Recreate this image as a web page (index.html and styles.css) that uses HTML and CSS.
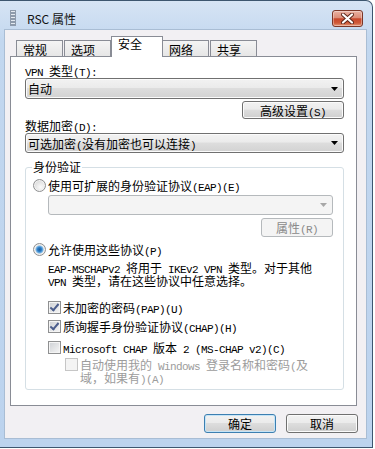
FILE: index.html
```html
<!DOCTYPE html>
<html lang="zh-CN">
<head>
    <meta charset="UTF-8">
    <meta name="viewport" content="width=device-width, initial-scale=1.0">
    <title>RSC 属性</title>
    <link rel="stylesheet" href="styles.css">
</head>
<body>
    <div class="window">
        <div class="titlebar">
            <svg class="app-icon" width="6" height="16" viewBox="0 0 6 16">
                <rect x="0" y="0" width="6" height="16" fill="#8d9aab"/>
                <rect x="1" y="1" width="4" height="1" fill="#e3e9f0"/>
                <rect x="1" y="4" width="4" height="1" fill="#e3e9f0"/>
                <rect x="1" y="7" width="4" height="1" fill="#e3e9f0"/>
                <rect x="1" y="10" width="4" height="1" fill="#e3e9f0"/>
                <rect x="1" y="13" width="4" height="1" fill="#e3e9f0"/>
            </svg>
            <span class="title">RSC 属性</span>
            <div class="close">
                <svg width="13" height="11" viewBox="0 0 13 11">
                    <path d="M2 1.5 L11 9.5 M11 1.5 L2 9.5" stroke="#5b2418" stroke-width="4" stroke-linecap="round"/>
                    <path d="M2 1.5 L11 9.5 M11 1.5 L2 9.5" stroke="#fff" stroke-width="2.2" stroke-linecap="round"/>
                </svg>
            </div>
        </div>

        <div class="client">
            <div class="tabs">
                <div class="tab">常规</div>
                <div class="tab">选项</div>
                <div class="tab active">安全</div>
                <div class="tab">网络</div>
                <div class="tab">共享</div>
            </div>

            <div class="panel">
                <div class="label label-first"><span class="en">VPN </span>类型<span class="en">(T):</span></div>
                <div class="combo vpn-combo">
                    <span>自动</span>
                    <svg class="arrow" width="7" height="4" viewBox="0 0 7 4"><path d="M0 0 H7 L3.5 4 Z"/></svg>
                </div>
                <div class="adv-row">
                    <button class="btn adv">高级设置<span class="en">(S)</span></button>
                </div>
                <div class="label">数据加密<span class="en">(D):</span></div>
                <div class="combo">
                    <span>可选加密<span class="en">(</span>没有加密也可以连接<span class="en">)</span></span>
                    <svg class="arrow" width="7" height="4" viewBox="0 0 7 4"><path d="M0 0 H7 L3.5 4 Z"/></svg>
                </div>

                <div class="group">
                    <div class="group-title">身份验证</div>

                    <div class="opt opt-eap">
                        <span class="radio"></span>
                        <span>使用可扩展的身份验证协议<span class="en">(EAP)(E)</span></span>
                    </div>
                    <div class="combo disabled eap-combo">
                        <span></span>
                        <svg class="arrow" width="7" height="4" viewBox="0 0 7 4"><path d="M0 0 H7 L3.5 4 Z"/></svg>
                    </div>
                    <div class="props-row">
                        <button class="btn disabled props">属性<span class="en">(R)</span></button>
                    </div>

                    <div class="opt opt-allow">
                        <span class="radio checked"></span>
                        <span>允许使用这些协议<span class="en">(P)</span></span>
                    </div>
                    <p class="desc"><span class="en">EAP-MSCHAPv2 </span>将用于<span class="en"> IKEv2 VPN </span>类型。对于其他<br><span class="en">VPN </span>类型，请在这些协议中任意选择。</p>

                    <div class="opt sub pap">
                        <span class="check on"></span>
                        <span>未加密的密码<span class="en">(PAP)(U)</span></span>
                    </div>
                    <div class="opt sub chap">
                        <span class="check on"></span>
                        <span>质询握手身份验证协议<span class="en">(CHAP)(H)</span></span>
                    </div>
                    <div class="opt sub mschap">
                        <span class="check"></span>
                        <span><span class="en">Microsoft CHAP </span>版本<span class="en"> 2 (MS-CHAP v2)(C)</span></span>
                    </div>
                    <div class="opt subsub auto">
                        <span class="check off"></span>
                        <span>自动使用我的<span class="en"> Windows </span>登录名称和密码<span class="en">(</span>及<br>域，如果有<span class="en">)(A)</span></span>
                    </div>
                </div>
            </div>

            <div class="footer">
                <button class="btn default">确定</button>
                <button class="btn">取消</button>
            </div>
        </div>
    </div>
</body>
</html>
```

FILE: styles.css
```css
* {
    box-sizing: border-box;
}

body {
    margin: 0;
    background: #fff;
    font-family: "Noto Sans CJK SC", sans-serif;
    font-size: 12px;
    line-height: 13px;
    color: #000;
}

.en {
    font-family: "Liberation Mono", monospace;
    font-size: 11px;
    letter-spacing: -0.6px;
    line-height: 0;
}

p {
    margin: 0;
}

/* window frame */

.window {
    width: 373px;
    height: 448px;
    border: 1px solid #3d566f;
    border-left: none;
    border-radius: 0 7px 0 0;
    background: linear-gradient(#d6e4f4, #c2d7ef 40px, #bcd3ee);
    display: flex;
    flex-direction: column;
}

.titlebar {
    height: 28px;
    flex: none;
    display: flex;
    align-items: flex-start;
    padding: 8px 9px 0 10px;
}

.app-icon {
    margin-top: 1px;
    flex: none;
}

.title {
    margin: 3px 0 0 11px;
    color: #111;
}

.close {
    margin-left: auto;
    margin-top: 1px;
    width: 31px;
    height: 17px;
    border: 1px solid #7b3627;
    border-radius: 3px;
    background: linear-gradient(#eab2a3, #dc8d78 45%, #c8472b 52%, #cf5a38 80%, #e49a7c);
    box-shadow: inset 0 0 0 1px rgba(255, 255, 255, 0.35);
    display: flex;
    align-items: center;
    justify-content: center;
}

.client {
    flex: 1;
    margin: 0 5px 8px 4px;
    background: #f2f0f3;
    border: 1px solid #a9bdd4;
    padding: 0 8px 0 5px;
}

/* tabs */

.tabs {
    display: flex;
    align-items: flex-end;
    height: 21px;
    margin: 6px 0 -1px 6px;
    position: relative;
    z-index: 1;
}

.tab {
    width: 47px;
    height: 16px;
    margin: 0 1px 1px 0;
    padding: 2px 0 0 6px;
    border: 1px solid #898c95;
    border-bottom: none;
    background: linear-gradient(#f4f4f4, #e6e6e6);
}

.tab.active {
    width: 52px;
    height: 21px;
    margin: 0 -1px 0 -1px;
    padding-top: 0;
    background: #fff;
    position: relative;
    z-index: 2;
}

.panel {
    width: 347px;
    height: 350px;
    background: #fff;
    border: 1px solid #898c95;
    padding: 0 12px 0 14px;
    display: flex;
    flex-direction: column;
}

.panel > *,
.group > * {
    flex: none;
}

.label {
    height: 13px;
}

.label-first {
    margin-top: 7px;
}

/* combo boxes and buttons */

.combo {
    height: 20px;
    margin-top: 1px;
    border: 1px solid #707070;
    border-radius: 3px;
    background: linear-gradient(#f2f2f2, #ebebeb 45%, #dddddd 50%, #d2d2d2);
    box-shadow: inset 0 0 0 1px #fbfbfb;
    display: flex;
    align-items: center;
    padding: 0 5px 0 2px;
}

.vpn-combo {
    height: 21px;
}

.arrow {
    margin-left: auto;
    fill: #000;
}

.btn {
    font: inherit;
    line-height: 13px;
    color: #000;
    padding: 0;
    border: 1px solid #707070;
    border-radius: 3px;
    background: linear-gradient(#f2f2f2, #ebebeb 45%, #dddddd 50%, #cfcfcf);
    box-shadow: inset 0 0 0 1px #fbfbfb;
}

.adv-row {
    display: flex;
    justify-content: flex-end;
    margin-top: 2px;
}

.adv {
    width: 102px;
    height: 18px;
}

.combo.disabled {
    border-color: #b5b9bc;
    background: #f4f4f4;
    box-shadow: none;
}

.combo.disabled .arrow {
    fill: #a7a7a7;
}

.btn.disabled {
    border-color: #b5b9bc;
    background: #f4f4f4;
    box-shadow: none;
    color: #8a8a8a;
}

/* group box */

.group {
    margin-top: 14px;
    height: 223px;
    border: 1px solid #d5dfe5;
    border-radius: 3px;
    padding: 0 10px 0 7px;
    display: flex;
    flex-direction: column;
}

.group-title {
    height: 13px;
    margin: -8px 0 0 -1px;
    padding: 0 1px;
    background: #fff;
    align-self: flex-start;
}

.opt {
    height: 13px;
    display: flex;
    align-items: center;
}

.opt-eap {
    margin-top: 6px;
}

.eap-combo {
    margin: 3px 0 0 15px;
}

.props-row {
    display: flex;
    justify-content: flex-end;
    margin-top: 3px;
}

.props {
    width: 72px;
    height: 19px;
}

.opt-allow {
    margin-top: 6px;
}

.desc {
    height: 26px;
    margin: 5px 0 0 15px;
}

.radio {
    width: 13px;
    height: 13px;
    margin-right: 2px;
    border-radius: 50%;
    border: 1px solid #8f9091;
    background: radial-gradient(circle at 60% 65%, #fbfbfb, #dcdcdc 70%, #cfcfcf);
    box-shadow: inset 0 0 0 1px #f2f2f2;
    flex: none;
}

.radio.checked {
    background: radial-gradient(circle, #1e5f9e 0, #2d7cc5 2px, #79b6e6 3.5px, #e8e8e8 4.5px, #d6d6d6 100%);
}

.check {
    width: 13px;
    height: 13px;
    margin-right: 2px;
    border: 1px solid #8f9091;
    background: linear-gradient(135deg, #cdd0d4, #f6f6f6);
    box-shadow: inset 0 0 0 1px #f4f4f4;
    flex: none;
    position: relative;
}

.check.on::after {
    content: "";
    position: absolute;
    left: 3px;
    top: 0px;
    width: 3px;
    height: 7px;
    border: solid #4b5d8c;
    border-width: 0 2px 2px 0;
    transform: rotate(40deg);
}

.check.off {
    border-color: #c6c6c6;
    background: #f4f4f4;
    box-shadow: none;
}

.sub {
    margin-left: 15px;
}

.pap {
    margin-top: 14px;
}

.chap {
    margin-top: 6px;
}

.mschap {
    margin-top: 8px;
}

.subsub {
    height: 26px;
    margin: 4px 0 0 32px;
    align-items: flex-start;
    color: #9c9c9c;
}

/* dialog buttons */

.footer {
    display: flex;
    justify-content: flex-end;
    gap: 10px;
    margin-top: 8px;
}

.footer .btn {
    width: 72px;
    height: 19px;
}

.btn.default {
    border-color: #3c7fb1;
    box-shadow: inset 0 0 0 1px #c5e4f7;
}
```
